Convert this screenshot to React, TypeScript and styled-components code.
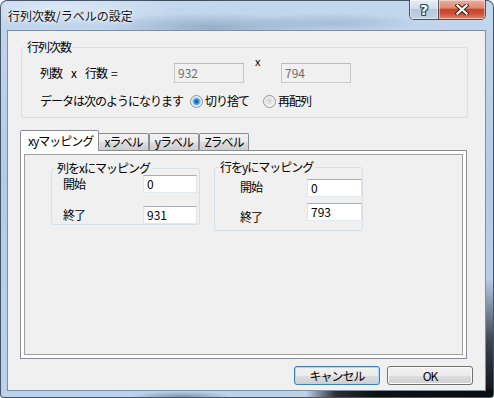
import React from 'react'
import styled, {createGlobalStyle} from 'styled-components'

const GlobalStyle = createGlobalStyle`
  html, body {
    margin: 0;
    padding: 0;
    background: #ffffff;
  }
  body {
    font-family: "Noto Sans CJK JP", "Noto Sans", sans-serif;
    font-size: 12px;
    color: #000;
  }
  * {
    box-sizing: border-box;
  }
`

const Window = styled.div`
  width: 494px;
  height: 398px;
  display: flex;
  flex-direction: column;
  padding: 0 7px 6px 6px;
  border: 1px solid rgba(40, 54, 70, 0.8);
  border-radius: 7px 7px 4px 4px;
  background:
    linear-gradient(to right, transparent 62%, #2a3037 68%, #0e1012 76%, #0b0c0d 100%) left bottom / 100% 8px no-repeat,
    linear-gradient(to bottom, transparent 70%, #3a4450 86%, #0e1012 100%) right top / 8px 100% no-repeat,
    radial-gradient(ellipse 50px 6px at 180px 100%, rgba(70, 95, 125, 0.55), transparent),
    radial-gradient(ellipse 110px 14px at 210px 26px, rgba(95, 125, 160, 0.45), transparent),
    radial-gradient(ellipse 90px 10px at 330px 22px, rgba(110, 140, 170, 0.35), transparent),
    radial-gradient(ellipse 120px 18px at 60px 6px, rgba(235, 243, 252, 0.6), transparent),
    linear-gradient(180deg, #c3d7ed 0%, #b4cbe6 45%, #bcd2ea 100%);
`

const TitleBar = styled.div`
  height: 29px;
  display: flex;
  align-items: flex-start;
  justify-content: space-between;
`

const Title = styled.div`
  height: 29px;
  display: flex;
  align-items: center;
  padding-left: 1px;
  font-size: 12px;
  color: #111;
  white-space: nowrap;
  text-shadow: 0 0 6px rgba(255, 255, 255, 0.9), 0 0 3px rgba(255, 255, 255, 0.9);
`

const CaptionButtons = styled.div`
  display: flex;
  height: 20px;
  margin-top: -1px;
  border: 1px solid rgba(45, 60, 80, 0.85);
  border-top: none;
  border-radius: 0 0 5px 5px;
  overflow: hidden;
`

const CaptionButton = styled.div<{$close?: boolean}>`
  width: ${({$close}) => ($close ? '47px' : '28px')};
  display: flex;
  align-items: center;
  justify-content: center;
  box-shadow: inset 0 0 0 1px rgba(255, 255, 255, 0.45);
  border-left: ${({$close}) => ($close ? '1px solid rgba(45, 60, 80, 0.7)' : 'none')};
  background: ${({$close}) =>
    $close
      ? 'linear-gradient(180deg, #eab0a0 0%, #dc8a72 42%, #c9452a 50%, #cc4f36 72%, #e2866a 100%)'
      : 'linear-gradient(180deg, #e6edf5 0%, #d2deeb 45%, #b6c7da 50%, #c3d3e4 100%)'};
`

const HelpGlyph = styled.span`
  font-family: "DejaVu Sans", sans-serif;
  font-weight: bold;
  font-size: 14px;
  line-height: 14px;
  color: #ffffff;
  text-shadow:
    1px 0 0 #34465a, -1px 0 0 #34465a, 0 1px 0 #34465a, 0 -1px 0 #34465a,
    1px 1px 0 #34465a, -1px -1px 0 #34465a, 1px -1px 0 #34465a, -1px 1px 0 #34465a;
`

const Client = styled.div`
  flex: 1;
  display: flex;
  flex-direction: column;
  border: 1px solid #7c8fa5;
  background: #f0f0f0;
  letter-spacing: -1px;
  white-space: nowrap;
`

const Group = styled.fieldset<{$w: number; $h: number; $top: number; $left: number}>`
  margin: ${({$top, $left}) => `${$top}px 0 0 ${$left}px`};
  padding: 0;
  min-width: 0;
  width: ${({$w}) => $w}px;
  height: ${({$h}) => $h}px;
  border: 1px solid #d5dfe5;
  border-radius: 3px;
  flex-shrink: 0;
`

const Legend = styled.legend`
  margin-left: 3px;
  padding: 0 2px;
  height: 12px;
  line-height: 12px;
  font-size: 12px;
`

const GroupBody = styled.div<{$pl: number}>`
  display: flex;
  flex-direction: column;
  padding-left: ${({$pl}) => $pl}px;
`

const Row = styled.div<{$mt: number; $h?: number}>`
  display: flex;
  align-items: center;
  height: ${({$h}) => $h ?? 20}px;
  margin-top: ${({$mt}) => $mt}px;
`

const Label = styled.span<{$w: number; $dy?: number}>`
  width: ${({$w}) => $w}px;
  flex-shrink: 0;
  line-height: 14px;
  white-space: pre;
  position: relative;
  top: ${({$dy}) => $dy ?? 0}px;
`

const Term = styled.span<{$ml?: number}>`
  margin-left: ${({$ml}) => $ml ?? 0}px;
`

const Edit = styled.div<{$w: number; $h: number; $disabled?: boolean}>`
  width: ${({$w}) => $w}px;
  height: ${({$h}) => $h}px;
  flex-shrink: 0;
  display: flex;
  align-items: center;
  padding-left: 3px;
  line-height: 14px;
  font-size: 12px;
  letter-spacing: 0;
  color: ${({$disabled}) => ($disabled ? '#6d6d6d' : '#000')};
  background: ${({$disabled}) => ($disabled ? '#f0f0f0' : '#ffffff')};
  border: 1px solid ${({$disabled}) => ($disabled ? '#c4c6ca' : '#e2e3ea')};
  border-top-color: ${({$disabled}) => ($disabled ? '#b8babe' : '#abadb3')};
  border-bottom-color: ${({$disabled}) => ($disabled ? '#c9cbcf' : '#e3e9ef')};
`

const Times = styled.span`
  width: 37px;
  flex-shrink: 0;
  padding-left: 11px;
  align-self: flex-start;
  margin-top: -9px;
  line-height: 14px;
  font-size: 11px;
`

const RadioOption = styled.label<{$ml?: number}>`
  display: flex;
  align-items: center;
  gap: 2px;
  margin-left: ${({$ml}) => $ml ?? 0}px;
  line-height: 14px;
`

const RadioDot = styled.span<{$checked?: boolean}>`
  width: 13px;
  height: 13px;
  flex-shrink: 0;
  border-radius: 50%;
  border: 1px solid #8f9399;
  background: ${({$checked}) =>
    $checked
      ? 'radial-gradient(circle at 50% 50%, #0d4c92 0, #1b76c6 1.6px, #47a9e6 2.8px, #7cc6f0 3.6px, #dfe3e7 4.2px, #f6f6f6 6px)'
      : 'radial-gradient(circle at 50% 45%, #d3d4d6 0, #e3e4e6 3px, #f7f7f7 5.5px)'};
`

const Tabs = styled.div`
  margin: 12px 0 0 12px;
  width: 447px;
  display: flex;
  flex-direction: column;
`

const TabStrip = styled.div`
  height: 20px;
  display: flex;
  align-items: flex-end;
  position: relative;
  z-index: 2;
`

const Tab = styled.div<{$active?: boolean; $w: number}>`
  width: ${({$w}) => $w}px;
  height: ${({$active}) => ($active ? '21px' : '17px')};
  margin-bottom: ${({$active}) => ($active ? '-1px' : '0')};
  margin-right: ${({$active}) => ($active ? '-1px' : '0')};
  position: relative;
  z-index: ${({$active}) => ($active ? 2 : 1)};
  display: flex;
  align-items: center;
  justify-content: ${({$active}) => ($active ? 'flex-start' : 'center')};
  padding-left: ${({$active}) => ($active ? '7px' : '0')};
  padding-bottom: ${({$active}) => ($active ? '1px' : '0')};
  line-height: 14px;
  border: 1px solid #898c95;
  border-bottom: none;
  border-radius: 2px 2px 0 0;
  background: ${({$active}) =>
    $active ? '#ffffff' : 'linear-gradient(180deg, #f2f2f2 0%, #ebebeb 50%, #dddddd 51%, #cfcfcf 100%)'};
`

const TabPanel = styled.div`
  height: 209px;
  padding: 3px;
  display: flex;
  border: 1px solid #898c95;
  background: #ffffff;
`

const Page = styled.div`
  flex: 1;
  display: flex;
  align-items: flex-start;
  border: 1px solid #a0a0a0;
  background: #f0f0f0;
`

const ButtonRow = styled.div`
  display: flex;
  justify-content: flex-end;
  gap: 7px;
  margin-top: 7px;
  padding-right: 12px;
`

const Button = styled.div<{$default?: boolean}>`
  width: 86px;
  height: 19px;
  display: flex;
  align-items: center;
  justify-content: center;
  line-height: 14px;
  border: 1px solid ${({$default}) => ($default ? '#3c7fb1' : '#707070')};
  border-radius: 3px;
  box-shadow: inset 0 0 0 1px ${({$default}) => ($default ? '#a6dbf7' : '#fbfbfb')};
  background: linear-gradient(180deg, #f2f2f2 0%, #ebebeb 50%, #dddddd 51%, #cfcfcf 100%);
`

const CloseIcon = () => (
  <svg width="14" height="11" viewBox="0 0 14 11">
    <path d="M2.5 1.5 L11.5 9.5 M11.5 1.5 L2.5 9.5" stroke="#3a1a14" strokeWidth="4.2" strokeLinecap="square"/>
    <path d="M2.5 1.5 L11.5 9.5 M11.5 1.5 L2.5 9.5" stroke="#ffffff" strokeWidth="2.3" strokeLinecap="square"/>
  </svg>
)

const App = () => (
  <>
    <GlobalStyle/>
    <Window>
      <TitleBar>
        <Title>行列次数/ラベルの設定</Title>
        <CaptionButtons>
          <CaptionButton><HelpGlyph>?</HelpGlyph></CaptionButton>
          <CaptionButton $close><CloseIcon/></CaptionButton>
        </CaptionButtons>
      </TitleBar>
      <Client>
        <Group $w={447} $h={77} $top={10} $left={13}>
          <Legend>行列次数</Legend>
          <GroupBody $pl={18}>
            <Row $mt={10}>
              <Label $w={134}>
                <Term>列数</Term>
                <Term $ml={9}>x</Term>
                <Term $ml={9}>行数</Term>
                <Term $ml={4}>=</Term>
              </Label>
              <Edit $w={70} $h={20} $disabled>932</Edit>
              <Times>x</Times>
              <Edit $w={70} $h={20} $disabled>794</Edit>
            </Row>
            <Row $mt={8}>
              <Label $w={150}>データは次のようになります</Label>
              <RadioOption>
                <RadioDot $checked/>
                切り捨て
              </RadioOption>
              <RadioOption $ml={14}>
                <RadioDot/>
                再配列
              </RadioOption>
            </Row>
          </GroupBody>
        </Group>

        <Tabs>
          <TabStrip>
            <Tab $active $w={79}>xyマッピング</Tab>
            <Tab $w={51}>xラベル</Tab>
            <Tab $w={50}>yラベル</Tab>
            <Tab $w={50}>Zラベル</Tab>
          </TabStrip>
          <TabPanel>
            <Page>
              <Group $w={149} $h={63} $top={7} $left={26}>
                <Legend>列をxにマッピング</Legend>
                <GroupBody $pl={11}>
                  <Row $mt={1} $h={18}>
                    <Label $w={80}>開始</Label>
                    <Edit $w={54} $h={18}>0</Edit>
                  </Row>
                  <Row $mt={13} $h={18}>
                    <Label $w={80}>終了</Label>
                    <Edit $w={54} $h={18}>931</Edit>
                  </Row>
                </GroupBody>
              </Group>
              <Group $w={149} $h={70} $top={6} $left={14}>
                <Legend>行をyにマッピング</Legend>
                <GroupBody $pl={25}>
                  <Row $mt={6} $h={18}>
                    <Label $w={67} $dy={-1}>開始</Label>
                    <Edit $w={55} $h={18}>0</Edit>
                  </Row>
                  <Row $mt={6} $h={18}>
                    <Label $w={67} $dy={5}>終了</Label>
                    <Edit $w={55} $h={18}>793</Edit>
                  </Row>
                </GroupBody>
              </Group>
            </Page>
          </TabPanel>
        </Tabs>

        <ButtonRow>
          <Button $default>キャンセル</Button>
          <Button>OK</Button>
        </ButtonRow>
      </Client>
    </Window>
  </>
)

export default App
